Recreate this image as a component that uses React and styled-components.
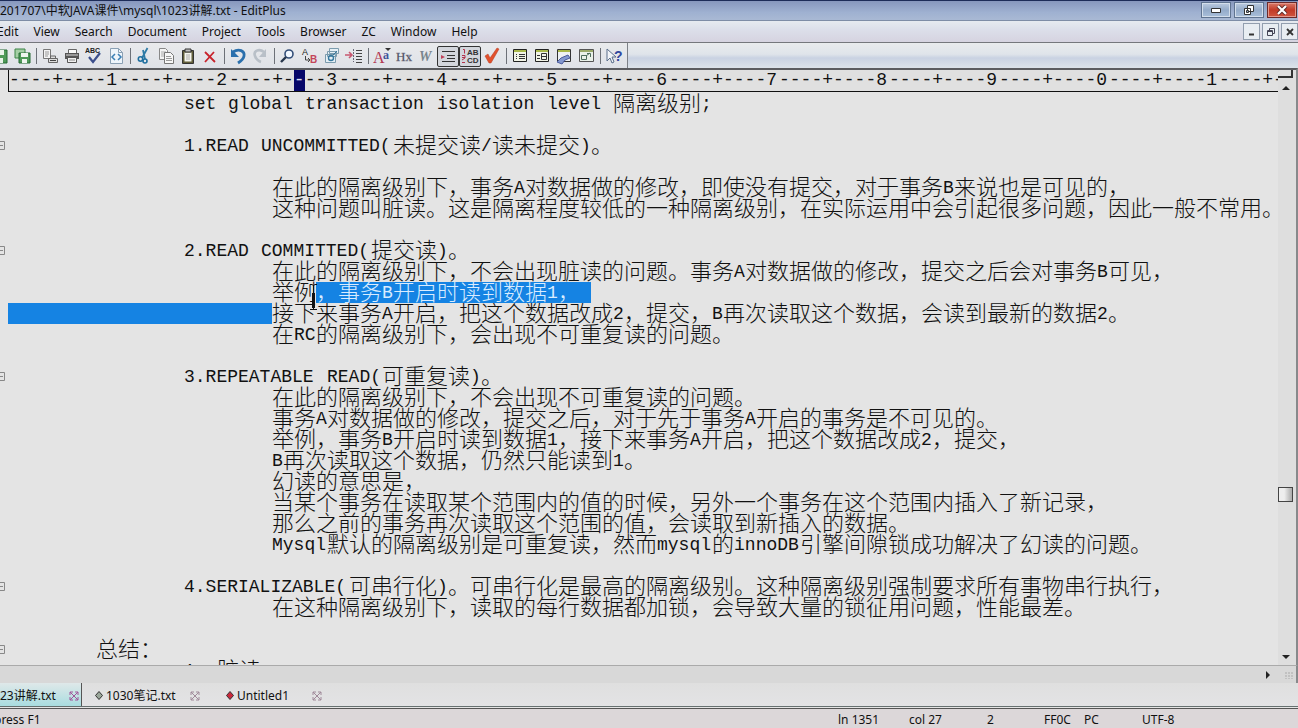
import { Fragment } from "react";
import styled, { createGlobalStyle } from "styled-components";

const menus = ["Edit", "View", "Search", "Document", "Project", "Tools", "Browser", "ZC", "Window", "Help"];

const rulerMarks = ["1", "2", "3", "4", "5", "6", "7", "8", "9", "0", "1", "2"];

// 本文の各行: indent はタブの数
const lines = [
    { indent: 2, text: "set global transaction isolation level 隔离级别;" },
    {},
    { indent: 2, fold: true, text: "1.READ UNCOMMITTED(未提交读/读未提交)。" },
    {},
    { indent: 3, text: "在此的隔离级别下，事务A对数据做的修改，即使没有提交，对于事务B来说也是可见的，" },
    { indent: 3, text: "这种问题叫脏读。这是隔离程度较低的一种隔离级别，在实际运用中会引起很多问题，因此一般不常用。" },
    {},
    { indent: 2, fold: true, text: "2.READ COMMITTED(提交读)。" },
    { indent: 3, text: "在此的隔离级别下，不会出现脏读的问题。事务A对数据做的修改，提交之后会对事务B可见，" },
    { indent: 3, text: "举例", selected: "，事务B开启时读到数据1， " },
    { indent: 3, selectedIndent: true, text: "接下来事务A开启，把这个数据改成2，提交，B再次读取这个数据，会读到最新的数据2。" },
    { indent: 3, text: "在RC的隔离级别下，会出现不可重复读的问题。" },
    {},
    { indent: 2, fold: true, text: "3.REPEATABLE READ(可重复读)。" },
    { indent: 3, text: "在此的隔离级别下，不会出现不可重复读的问题。" },
    { indent: 3, text: "事务A对数据做的修改，提交之后，对于先于事务A开启的事务是不可见的。" },
    { indent: 3, text: "举例，事务B开启时读到数据1，接下来事务A开启，把这个数据改成2，提交，" },
    { indent: 3, text: "B再次读取这个数据，仍然只能读到1。" },
    { indent: 3, text: "幻读的意思是，" },
    { indent: 3, text: "当某个事务在读取某个范围内的值的时候，另外一个事务在这个范围内插入了新记录，" },
    { indent: 3, text: "那么之前的事务再次读取这个范围的值，会读取到新插入的数据。" },
    { indent: 3, text: "Mysql默认的隔离级别是可重复读，然而mysql的innoDB引擎间隙锁成功解决了幻读的问题。" },
    {},
    { indent: 2, fold: true, text: "4.SERIALIZABLE(可串行化)。可串行化是最高的隔离级别。这种隔离级别强制要求所有事物串行执行，" },
    { indent: 3, text: "在这种隔离级别下，读取的每行数据都加锁，会导致大量的锁征用问题，性能最差。" },
    {},
    { indent: 1, fold: true, text: "总结：" },
    { indent: 2, text: "1、脏读" },
];

const icons = {
    save: (
        <>
            <path d="M1 3h15v13H1z" fill="#4f9a58" stroke="#256b33" />
            <path d="M4 3h9v5H4zM5 11h7v5H5z" fill="#e8f2e8" />
        </>
    ),
    saveAll: (
        <>
            <path d="M2 2h10v9H2z" fill="#a5cfa5" stroke="#3c8547" />
            <path d="M6 6h11v10H6z" fill="#4f9a58" stroke="#256b33" />
            <path d="M8 6h7v4H8zM9 12h5v4H9z" fill="#eef5ee" />
        </>
    ),
    preview: (
        <>
            <path d="M2.500 2.500h7v9h-7z" fill="#f3f3f3" stroke="#777" />
            <path d="M4 5h4M4 7h4M4 9h3" stroke="#999" />
            <path d="M7.500 11.500h9v4h-9zM9.500 11V9h5v2" fill="#ddd" stroke="#666" />
            <path d="M9 13.500h6" stroke="#444" />
        </>
    ),
    print: (
        <>
            <path d="M5.500 6V2.500h8V6" fill="#fafafa" stroke="#666" />
            <path d="M2 6h14v6H2z" fill="#555" />
            <path d="M3 8h12" stroke="#ddd" />
            <path d="M4.500 10.500h9v5h-9z" fill="#f1f1f1" stroke="#555" />
            <path d="M6 13h6" stroke="#888" />
        </>
    ),
    spell: (
        <>
            <text x="0" y="6" fontSize="7" fontWeight="700" fill="#222">ABC</text>
            <path d="M4 10l4 5 7-9" fill="none" stroke="#3c4f8c" strokeWidth="2.200" />
        </>
    ),
    browse: (
        <>
            <path d="M3.500 1.500h8l4 4v11h-12z" fill="#eef5fb" stroke="#8aa0b4" />
            <path d="M11.500 1.500v4h4" fill="none" stroke="#8aa0b4" />
            <path d="M8 7l-3 3 3 3M11 7l3 3-3 3" fill="none" stroke="#3a7fb5" strokeWidth="1.500" />
        </>
    ),
    cut: (
        <>
            <path d="M12.500 1L7 11M8 3l2 9" fill="none" stroke="#2f7ba6" strokeWidth="1.800" />
            <circle cx="5.500" cy="12" r="2.200" fill="none" stroke="#1f6f9f" strokeWidth="1.600" />
            <circle cx="10" cy="14" r="2" fill="none" stroke="#1f6f9f" strokeWidth="1.600" />
        </>
    ),
    copy: (
        <>
            <path d="M2.500 1.500h6l2 2v9h-8z" fill="#f4f4f4" stroke="#888" />
            <path d="M4 5h5M4 7h5M4 9h4" stroke="#aaa" />
            <path d="M7.500 5.500h6l3 3v8h-9z" fill="#f7f7f7" stroke="#777" />
            <path d="M9 9.500h5M9 11.500h6M9 13.500h6" stroke="#999" />
        </>
    ),
    paste: (
        <>
            <path d="M3.500 3.500h11v13h-11z" fill="#615e3a" stroke="#333" />
            <path d="M5.500 5.500h7v9h-7z" fill="#f5f5ee" />
            <path d="M6 2h6v3H6z" fill="#bbb" stroke="#333" />
            <path d="M7 8h4M7 10h4M7 12h4" stroke="#aaa" />
        </>
    ),
    remove: <path d="M4 5l10 10M13 5L4 15" stroke="#c8232c" strokeWidth="1.800" />,
    undo: (
        <>
            <path d="M4 5c6-4 12-1 11 4-.5 3-3 5-6 7" fill="none" stroke="#2b70ad" strokeWidth="2.800" />
            <path d="M2 2v8h8z" fill="#2b70ad" />
        </>
    ),
    redo: (
        <>
            <path d="M13 5C8 1 2 4 4 9c1 3 3 5 6 6" fill="none" stroke="#b9c0c8" strokeWidth="2.600" />
            <path d="M15 2v8H8z" fill="#b9c0c8" />
        </>
    ),
    find: (
        <>
            <circle cx="10" cy="7" r="4" fill="#f2f8ff" stroke="#334f78" strokeWidth="1.600" />
            <path d="M7 10l-5 5" stroke="#27364c" strokeWidth="2.400" />
        </>
    ),
    replace: (
        <>
            <text x="1" y="8" fontSize="9" fill="#222">A</text>
            <text x="9" y="16" fontSize="10" fontWeight="700" fill="#c4455a">B</text>
            <path d="M4.500 9v4h4M7 11l2 2-2 2" fill="none" stroke="#444" />
        </>
    ),
    findFiles: (
        <>
            <path d="M6.500 1.500h9v5h-9zM4.500 4.500h9v5h-9zM2.500 7.500h10v8h-10z" fill="#e5eff5" stroke="#7b9bad" />
            <circle cx="8" cy="11" r="2.500" fill="none" stroke="#37799f" strokeWidth="1.400" />
            <path d="M10 8l4-4" stroke="#37799f" />
        </>
    ),
    goTo: (
        <>
            <path d="M0 8h6M4 5l3 3-3 3" fill="none" stroke="#c85870" strokeWidth="1.600" />
            <path d="M8.500 2v13" stroke="#667" strokeDasharray="2 1" />
            <path d="M11 3.500h6M11 6.500h6M11 9.500h6M11 12.500h6M11 15.500h6" stroke="#444" />
        </>
    ),
    font: (
        <>
            <text x="0" y="16" fontFamily="Liberation Serif" fontSize="16" fill="#b23854">A</text>
            <text x="10" y="12" fontFamily="Liberation Serif" fontSize="12" fontWeight="700" fill="#40539a">a</text>
            <path d="M12 1h6l-3 3z" fill="#333" />
        </>
    ),
    hex: <text x="1" y="14" fontFamily="Liberation Serif" fontSize="13" fill="#445" stroke="#778" strokeWidth=".3">Hx</text>,
    wrap: <text x="2" y="14" fontFamily="Liberation Serif" fontStyle="italic" fontWeight="700" fontSize="14" fill="#79858d">W</text>,
    indent: (
        <>
            <path d="M3 4.500h13M8 8.500h8M8 11.500h8M3 14.500h13" stroke="#333" />
            <path d="M2 8l4 2-4 2z" fill="#bf4058" />
        </>
    ),
    lineNo: (
        <>
            <path d="M2 2.500h1.500v4M1 10.500h3M1 8.500h3v2.500l-3 2M1 15.500h3" fill="none" stroke="#b4334c" />
            <text x="6" y="8" fontSize="8" fontWeight="700" fill="#333">AB</text>
            <text x="6" y="16" fontSize="8" fontWeight="700" fill="#333">CD</text>
        </>
    ),
    check: <path d="M2 9l3-2 2 4 7-10 2 1-8 14H6z" fill="#e2512c" stroke="#b43a22" strokeWidth=".5" />,
    panelList: (
        <>
            <path d="M2.500 2.500h13v12h-13z" fill="#f1f3e6" stroke="#222" />
            <path d="M3 4h12" stroke="#a9b84a" strokeWidth="2" />
            <path d="M5 7.500h1M8 7.500h6M5 9.500h1M8 9.500h6M5 11.500h1M8 11.500h6" stroke="#333" />
        </>
    ),
    panelSplit: (
        <>
            <path d="M2.500 2.500h13v12h-13z" fill="#f1f3e6" stroke="#222" />
            <path d="M3 4h12" stroke="#a9b84a" strokeWidth="2" />
            <path d="M4 8.500h3M4 11.500h3M8.500 6.500h5v6h-5zM8.500 9.500h5" fill="none" stroke="#333" />
        </>
    ),
    panelView: (
        <>
            <path d="M2.500 2.500h13v12h-13z" fill="#eef1f3" stroke="#333" />
            <path d="M3 4h12" stroke="#a9b84a" strokeWidth="2" />
            <path d="M2 15l4-4 7-3 2 3-5 2-3 4z" fill="#8498cf" stroke="#4a5b9d" />
        </>
    ),
    panelFull: (
        <>
            <path d="M2.500 2.500h14v12h-14z" fill="#e9f1e9" stroke="#555" />
            <path d="M3 4h13" stroke="#9aaa6a" strokeWidth="2" />
            <path d="M4.500 8.500h5v4h-5zM9 9l4-3M10 6.500h3.500V10" fill="none" stroke="#4c6d5b" />
        </>
    ),
    help: (
        <>
            <path d="M2 2v12l3-3 2 5 2-1-2-5h4z" fill="#f2f4f8" stroke="#5b6f8c" />
            <text x="9" y="14" fontSize="14" fontWeight="700" fill="#31479d">?</text>
        </>
    ),
};

const toolGroups = [
    ["save", "saveAll"],
    ["preview", "print", "spell", "browse"],
    ["cut", "copy", "paste", "remove"],
    ["undo", "redo"],
    ["find", "replace", "findFiles", "goTo"],
    ["font", "hex", "wrap", "indent", "lineNo", "check"],
    ["panelList", "panelSplit", "panelView", "panelFull"],
    ["help"],
];

const pressed = ["indent", "lineNo"];

// 半角は 11px、全角は 22px のマス目に並べる
function Runs({ text = "" }) {
    const runs = text.match(/[\x21-\x7e]+ ?| +|[^\x20-\x7e]+/g) || [];
    return runs.map((run, i) =>
        /[\x20-\x7e]/.test(run) ? (
            <Latin key={i} $cells={run.length}>
                {run}
            </Latin>
        ) : (
            <Han key={i}>{run}</Han>
        ),
    );
}

function TitleBar() {
    return (
        <TitleBarStyle>
            <h1>201707\中软JAVA课件\mysql\1023讲解.txt - EditPlus</h1>
            <WindowButtons>
                <WindowButton aria-label="Minimize">
                    <svg width="12" height="8" viewBox="0 0 12 8">
                        <path d="M1.500 2.500h9v4h-9z" fill="#fff" stroke="#333" />
                    </svg>
                </WindowButton>
                <WindowButton aria-label="Restore">
                    <svg width="12" height="12" viewBox="0 0 12 12">
                        <path d="M4.500 1.500h6v6h-6zM1.500 4.500h6v6h-6z" fill="#fff" stroke="#333" />
                        <path d="M3.500 6.500h2v2h-2z" fill="#8ea9c8" stroke="#333" />
                    </svg>
                </WindowButton>
                <WindowButton $close aria-label="Close">
                    <svg width="12" height="10" viewBox="0 0 12 10">
                        <path d="M2 1l8 8M10 1L2 9" stroke="#5c2a28" strokeWidth="4" />
                        <path d="M2 1l8 8M10 1L2 9" stroke="#fff" strokeWidth="2.200" />
                    </svg>
                </WindowButton>
            </WindowButtons>
        </TitleBarStyle>
    );
}

function MenuBar() {
    return (
        <MenuBarStyle>
            <nav>
                {menus.map((name) => (
                    <button key={name}>{name}</button>
                ))}
            </nav>
            <div>
                <ChildButton aria-label="Minimize document">
                    <svg width="10" height="10" viewBox="0 0 10 10">
                        <path d="M2 7.500h5" stroke="#333" strokeWidth="2" />
                    </svg>
                </ChildButton>
                <ChildButton aria-label="Restore document">
                    <svg width="10" height="10" viewBox="0 0 10 10">
                        <path d="M3.500 3V1.500h5v5H7M1.500 3.500h5v5h-5zM1 4.500h5" fill="none" stroke="#445" />
                    </svg>
                </ChildButton>
                <ChildButton aria-label="Close document">
                    <svg width="10" height="10" viewBox="0 0 10 10">
                        <path d="M2 2l6 6M8 2L2 8" stroke="#333" strokeWidth="1.800" />
                    </svg>
                </ChildButton>
            </div>
        </MenuBarStyle>
    );
}

function ToolBar() {
    return (
        <ToolBarStyle>
            <ToolStrip>
                {toolGroups.map((group, i) => (
                    <Fragment key={group[0]}>
                        {i > 0 && <Separator />}
                        {group.map((name) => (
                            <ToolButton key={name} aria-label={name} $pressed={pressed.includes(name)}>
                                <svg width="18" height="18" viewBox="0 0 18 18">
                                    {icons[name]}
                                </svg>
                            </ToolButton>
                        ))}
                    </Fragment>
                ))}
            </ToolStrip>
        </ToolBarStyle>
    );
}

function Ruler() {
    return (
        <RulerStyle>
            {rulerMarks.map((mark, i) => (
                <span key={i}>
                    {i === 2 ? (
                        <>
                            ----+-<mark>-</mark>--{mark}
                        </>
                    ) : (
                        `----+----${mark}`
                    )}
                </span>
            ))}
        </RulerStyle>
    );
}

function Editor() {
    return (
        <EditorStyle role="document">
            {lines.map((line, i) => (
                <Line key={i}>
                    <Gutter>
                        {line.fold && (
                            <svg width="5" height="9" viewBox="0 0 5 9">
                                <path d="M0 .5h4.500v8H0M0 4.500h3" fill="none" stroke="#888" />
                            </svg>
                        )}
                    </Gutter>
                    <Indent $tabs={line.indent} $selected={line.selectedIndent} />
                    <Runs text={line.text} />
                    {line.selected && (
                        <Selection>
                            <Runs text={line.selected} />
                            <svg width="9" height="28" viewBox="0 0 9 28">
                                <path d="M1 1.500h2l1.500 1L6 1.500h2M4.500 2v24M1 26.500h7" fill="none" stroke="#111" />
                                <path d="M4.500 10v15" stroke="#111" strokeWidth="3" />
                            </svg>
                        </Selection>
                    )}
                </Line>
            ))}
        </EditorStyle>
    );
}

function ScrollBar() {
    return (
        <ScrollBarStyle>
            <Splitter />
            <svg width="8" height="5" viewBox="0 0 8 5">
                <path d="M0 5l4-4 4 4z" fill="#222" />
            </svg>
            <Track>
                <Thumb />
            </Track>
            <svg width="8" height="5" viewBox="0 0 8 5">
                <path d="M0 0h8L4 4z" fill="#222" />
            </svg>
        </ScrollBarStyle>
    );
}

function CloseMark() {
    return (
        <svg width="10" height="10" viewBox="0 0 10 10">
            <path d="M1 1l8 8M9 1L1 9M1 4V1h3M6 1h3v3M1 6v3h3M6 9h3V6" fill="none" stroke="currentColor" />
        </svg>
    );
}

function Diamond({ fill }) {
    return (
        <svg width="8" height="9" viewBox="0 0 8 9">
            <path d="M4 .5l3.500 4L4 8.500.5 4.500z" fill={fill} stroke="#333" />
        </svg>
    );
}

function DocTabs() {
    return (
        <DocTabsStyle>
            <Tab $active $width={82}>
                23讲解.txt
                <CloseMark />
            </Tab>
            <Tab $width={131}>
                <Diamond fill="#9aa79a" />
                1030笔记.txt
                <CloseMark />
            </Tab>
            <Tab $width={122}>
                <Diamond fill="#c9283c" />
                Untitled1
                <CloseMark />
            </Tab>
        </DocTabsStyle>
    );
}

function StatusBar() {
    return (
        <StatusBarStyle>
            <p>press F1</p>
            <StatusCell $width={71}>ln 1351</StatusCell>
            <StatusCell $width={78}>col 27</StatusCell>
            <StatusCell $width={57}>2</StatusCell>
            <StatusCell $width={40}>FF0C</StatusCell>
            <StatusCell $width={58}>PC</StatusCell>
            <StatusCell $width={156}>UTF-8</StatusCell>
        </StatusBarStyle>
    );
}

function App() {
    return (
        <AppStyle>
            <GlobalStyle />
            <TitleBar />
            <MenuBar />
            <ToolBar />
            <Workspace>
                <Page>
                    <Ruler />
                    <Editor />
                </Page>
                <ScrollBar />
            </Workspace>
            <BottomScroll>
                <svg width="5" height="8" viewBox="0 0 5 8">
                    <path d="M0 0l4 4-4 4z" fill="#222" />
                </svg>
                <svg width="10" height="10" viewBox="0 0 10 10">
                    <path d="M1 2v7M4 2v7M7 2v7" stroke="#aaa" strokeDasharray="2 1" />
                </svg>
            </BottomScroll>
            <DocTabs />
            <StatusBar />
        </AppStyle>
    );
}

const GlobalStyle = createGlobalStyle`
    * {
        box-sizing: border-box;
    }

    body {
        margin: 0;
        overflow: hidden;
    }

    h1, p {
        margin: 0;
    }

    button {
        border: 0;
        padding: 0;
        background: none;
        font: inherit;
        color: inherit;
    }
`;

const AppStyle = styled.div`
    display: flex;
    flex-direction: column;
    height: 100vh;
    overflow: hidden;
    background: #e4e4e4;
    color: #111;
    font: 12px/16px "Noto Sans", "Noto Sans CJK SC", sans-serif;
`;

const TitleBarStyle = styled.header`
    display: flex;
    justify-content: space-between;
    height: 21px;
    flex: none;
    border-top: 1px solid #1d2c58;
    border-bottom: 1px solid #7e8da6;
    background: linear-gradient(#8797bd, #9fb1d1 60%, #a9b9d4);

    & > h1 {
        font-size: 12px;
        font-weight: 400;
        line-height: 20px;
        white-space: nowrap;
    }
`;

const WindowButtons = styled.div`
    display: flex;
    gap: 3px;
    padding: 1px 1px 2px 0;
`;

const WindowButton = styled.button`
    display: flex;
    align-items: center;
    justify-content: center;
    width: 30px;
    border: 1px solid ${({ $close }) => ($close ? "#6b2a2a" : "#5f7390")};
    box-shadow: inset 0 0 0 1px ${({ $close }) => ($close ? "#e4988c" : "#d3deeb")};
    background: ${({ $close }) => ($close ? "linear-gradient(#d87a6a, #c23a27 50%, #cf5540)" : "linear-gradient(#bccbe0, #94abc9 50%, #a9bfda)")};
`;

const MenuBarStyle = styled.div`
    display: flex;
    justify-content: space-between;
    align-items: center;
    height: 22px;
    flex: none;
    border-bottom: 1px solid #75777c;
    background: linear-gradient(#e6ebf0, #dcdfea 40%, #d6d3e0);

    & > nav,
    & > div {
        display: flex;
    }

    & > nav {
        gap: 1px;
        margin-left: -10px;
    }

    & > nav > button {
        padding: 0 7px;
    }

    & > div {
        gap: 2px;
    }
`;

const ChildButton = styled.button`
    display: flex;
    align-items: center;
    justify-content: center;
    width: 17px;
    height: 17px;
    border: 1px solid #929eae;
    background: #e8edf2;
`;

const ToolBarStyle = styled.div`
    display: flex;
    height: 25px;
    flex: none;
    overflow: hidden;
    background: linear-gradient(#e9ebed, #dfe4ea 45%, #c9d2e2 60%, #dce3ea);
`;

const ToolStrip = styled.div`
    display: flex;
    align-items: center;
    margin-left: -11px;
    padding: 1px 2px 0 0;
    border-right: 1px solid #7d8188;
    background: linear-gradient(#e9eaec, #dfe2e8);
`;

const Separator = styled.span`
    flex: none;
    width: 1px;
    height: 16px;
    margin: 0 2px 0 3px;
    background: #6d7178;
`;

const ToolButton = styled.button`
    display: flex;
    align-items: center;
    justify-content: center;
    flex: none;
    width: 22px;
    height: 21px;
    border: 1px solid ${({ $pressed }) => ($pressed ? "#333" : "transparent")};
    border-radius: 2px;
    background: ${({ $pressed }) => ($pressed ? "#d3d6dc" : "none")};
    font-family: "Liberation Sans", sans-serif;

    & > svg {
        flex: none;
    }
`;

const Workspace = styled.main`
    display: flex;
    flex: 1;
    min-height: 0;
    border-top: 2px solid #5b5c60;
    border-right: 2px solid #87898b;
`;

const Page = styled.div`
    display: flex;
    flex-direction: column;
    flex: 1;
    min-width: 0;
    overflow: hidden;
    font: 18px/23px "Liberation Mono", "Noto Sans CJK SC", monospace;
    white-space: pre;
`;

const RulerStyle = styled.div`
    display: flex;
    flex: none;
    height: 22px;
    margin-left: 8px;
    overflow: hidden;
    border-left: 1px solid #111;
    border-bottom: 1px solid #111;
    background: #e0e0e0;
    line-height: 21px;

    & > span {
        flex: none;
        width: 110px;
    }

    & mark {
        display: inline-block;
        height: 21px;
        background: #070769;
        color: #dde;
        vertical-align: top;
    }
`;

const EditorStyle = styled.div`
    flex: 1;
    min-height: 0;
    padding-top: 1px;
    overflow: hidden;
`;

const Line = styled.div`
    display: flex;
    height: 21px;
`;

const Gutter = styled.div`
    display: flex;
    align-items: center;
    flex: none;
    width: 8px;
`;

const Indent = styled.div`
    flex: none;
    width: ${({ $tabs = 0 }) => $tabs * 88}px;
    background: ${({ $selected }) => ($selected ? "#1583e3" : "none")};
`;

const Latin = styled.span`
    flex: none;
    width: ${({ $cells }) => $cells * 11}px;
`;

const Han = styled.span`
    flex: none;
    font: 300 22px/17px "Noto Sans CJK SC", sans-serif;
`;

const Selection = styled.span`
    display: flex;
    position: relative;
    background: #1583e3;
    color: #d9ecff;

    & > svg {
        position: absolute;
        left: -7px;
        top: 1px;
    }
`;

const ScrollBarStyle = styled.div`
    display: flex;
    flex-direction: column;
    align-items: center;
    flex: none;
    width: 18px;
    padding: 0 3px 5px 0;
    background: #dedede;
`;

const Splitter = styled.div`
    align-self: stretch;
    height: 8px;
    margin-bottom: 7px;
    border-right: 2px solid #333;
    border-bottom: 2px solid #333;
`;

const Track = styled.div`
    display: flex;
    flex: 1;
    align-items: flex-end;
    padding-bottom: 153px;
`;

const Thumb = styled.div`
    width: 15px;
    height: 15px;
    border: 1px solid #444;
    background: linear-gradient(90deg, #eee 40%, #aaa);
`;

const BottomScroll = styled.div`
    display: flex;
    align-items: center;
    justify-content: flex-end;
    gap: 14px;
    height: 18px;
    flex: none;
    padding-right: 1px;
    border-top: 1px solid #aaa;
    border-right: 2px solid #87898b;
    background: #d8d8d8;
`;

const DocTabsStyle = styled.div`
    display: flex;
    height: 24px;
    flex: none;
    border-bottom: 1px solid #667070;
    background: linear-gradient(#dfdfdf, #e3e3e5);
`;

const Tab = styled.button`
    display: flex;
    align-items: center;
    gap: 3px;
    width: ${({ $width }) => $width}px;
    padding: ${({ $active }) => ($active ? "2px 2px 0 0" : "2px 13px 0 13px")};
    border-right: ${({ $active }) => ($active ? "1px solid #555" : "0")};
    background: ${({ $active }) => ($active ? "linear-gradient(#dfe8e9, #a9dde0)" : "none")};
    white-space: nowrap;

    & > svg:last-child {
        margin-left: auto;
        color: ${({ $active }) => ($active ? "#a0559a" : "#a08a9a")};
    }
`;

const StatusBarStyle = styled.footer`
    display: flex;
    align-items: center;
    height: 20px;
    flex: none;
    margin-top: 1px;
    padding-top: 2px;
    border-top: 1px solid #555;
    background: #dcd7d9;

    & > p {
        flex: 1;
        margin-left: -6px;
    }
`;

const StatusCell = styled.span`
    flex: none;
    width: ${({ $width }) => $width}px;
`;

export default App;
